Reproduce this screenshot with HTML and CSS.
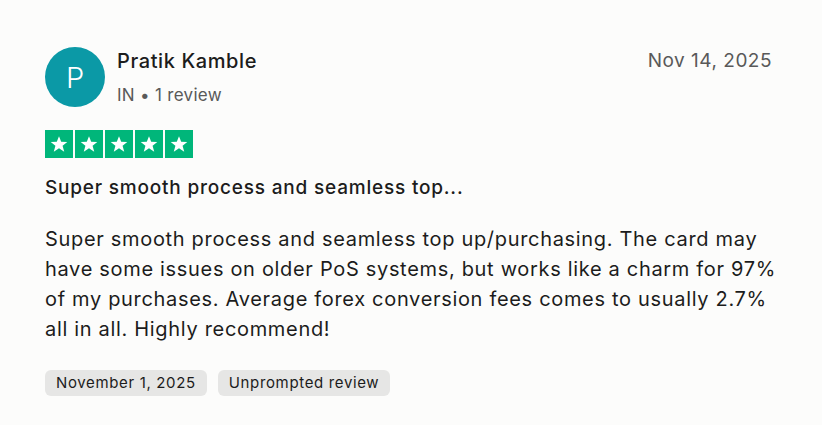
FILE: index.html
```html
<!DOCTYPE html>
<html lang="en">
<head>
<meta charset="utf-8">
<title>Review</title>
<link rel="stylesheet" href="styles.css">
</head>
<body>
<article class="review">
  <header class="head">
    <div class="avatar">P</div>
    <div class="who">
      <div class="name">Pratik Kamble</div>
      <div class="meta">IN • 1 review</div>
    </div>
    <time class="date">Nov 14, 2025</time>
  </header>
  <div class="stars">
    <span class="star"><svg viewBox="0 0 24 24"><path d="M12 3.5l2.4 6.1 6.6.3-5.1 4.1 1.8 6.4L12 16.7l-5.7 3.7 1.8-6.4L3 9.9l6.6-.3z"/></svg></span>
    <span class="star"><svg viewBox="0 0 24 24"><path d="M12 3.5l2.4 6.1 6.6.3-5.1 4.1 1.8 6.4L12 16.7l-5.7 3.7 1.8-6.4L3 9.9l6.6-.3z"/></svg></span>
    <span class="star"><svg viewBox="0 0 24 24"><path d="M12 3.5l2.4 6.1 6.6.3-5.1 4.1 1.8 6.4L12 16.7l-5.7 3.7 1.8-6.4L3 9.9l6.6-.3z"/></svg></span>
    <span class="star"><svg viewBox="0 0 24 24"><path d="M12 3.5l2.4 6.1 6.6.3-5.1 4.1 1.8 6.4L12 16.7l-5.7 3.7 1.8-6.4L3 9.9l6.6-.3z"/></svg></span>
    <span class="star"><svg viewBox="0 0 24 24"><path d="M12 3.5l2.4 6.1 6.6.3-5.1 4.1 1.8 6.4L12 16.7l-5.7 3.7 1.8-6.4L3 9.9l6.6-.3z"/></svg></span>
  </div>
  <h2 class="title">Super smooth process and seamless top...</h2>
  <p class="body">Super smooth process and seamless top up/purchasing. The card may have some issues on older PoS systems, but works like a charm for 97% of my purchases. Average forex conversion fees comes to usually 2.7% all in all. Highly recommend!</p>
  <div class="tags">
    <span class="tag">November 1, 2025</span>
    <span class="tag">Unprompted review</span>
  </div>
</article>
</body>
</html>
```

FILE: styles.css
```css
html, body {
  margin: 0;
  background: #fcfcfb;
}
body {
  font-family: Inter, "Noto Sans", sans-serif;
  color: #1c1c1c;
}
.review {
  padding: 47px 50px 0 45px;
}
.head {
  display: flex;
  align-items: flex-start;
}
.avatar {
  width: 60px;
  height: 60px;
  border-radius: 50%;
  background: #0b99a6;
  color: #fff;
  font-size: 29px;
  font-weight: 300;
  display: flex;
  align-items: center;
  justify-content: center;
  flex: none;
}
.who {
  margin-left: 12px;
  flex: 1;
}
.name {
  font-size: 20px;
  font-weight: 500;
  letter-spacing: 0.6px;
  line-height: 28px;
}
.meta {
  margin-top: 8px;
  font-size: 17px;
  color: #595959;
  line-height: 24px;
  letter-spacing: 0.3px;
}
.date {
  font-size: 19px;
  color: #595959;
  line-height: 28px;
  letter-spacing: 0.5px;
}
.stars {
  display: flex;
  gap: 2px;
  margin-top: 23px;
}
.star {
  width: 28px;
  height: 28px;
  background: #00b67a;
  display: flex;
  align-items: center;
  justify-content: center;
}
.star svg {
  width: 22px;
  height: 22px;
  fill: #fff;
}
.title {
  margin: 17px 0 0;
  font-size: 19px;
  font-weight: 500;
  line-height: 26px;
  letter-spacing: 0.8px;
}
.body {
  margin: 23px -15px 0 0;
  font-size: 20px;
  line-height: 30px;
  letter-spacing: 0.68px;
}
.tags {
  display: flex;
  gap: 11px;
  margin-top: 26px;
}
.tag {
  background: #e6e6e5;
  border-radius: 6px;
  padding: 0 11px;
  height: 26px;
  line-height: 26px;
  font-size: 15px;
  letter-spacing: 0.65px;
}
```
